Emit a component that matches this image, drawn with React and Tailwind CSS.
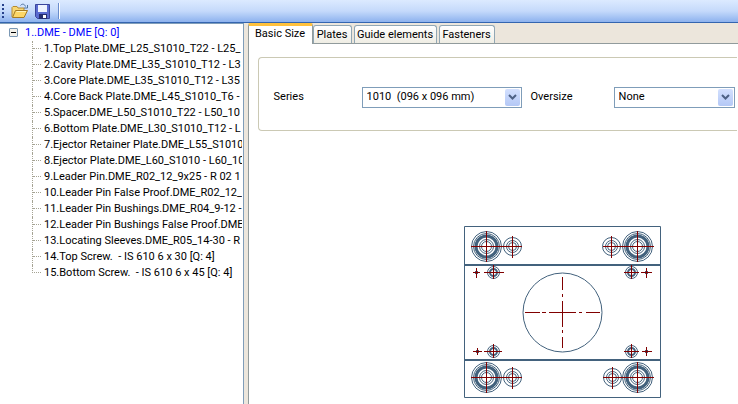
import React from "react";

const items = [
  "1.Top Plate.DME_L25_S1010_T22 - L25_",
  "2.Cavity Plate.DME_L35_S1010_T12 - L3",
  "3.Core Plate.DME_L35_S1010_T12 - L35",
  "4.Core Back Plate.DME_L45_S1010_T6 -",
  "5.Spacer.DME_L50_S1010_T22 - L50_10",
  "6.Bottom Plate.DME_L30_S1010_T12 - L",
  "7.Ejector Retainer Plate.DME_L55_S1010",
  "8.Ejector Plate.DME_L60_S1010 - L60_10",
  "9.Leader Pin.DME_R02_12_9x25 - R 02 1",
  "10.Leader Pin False Proof.DME_R02_12_",
  "11.Leader Pin Bushings.DME_R04_9-12 -",
  "12.Leader Pin Bushings False Proof.DME_",
  "13.Locating Sleeves.DME_R05_14-30 - R",
  "14.Top Screw.\u00a0 - IS 610 6 x 30 [Q: 4]",
  "15.Bottom Screw.\u00a0 - IS 610 6 x 45 [Q: 4]",
];

const tabs = [
  { label: "Plates", width: "w-[39px]" },
  { label: "Guide elements", width: "w-[83px]" },
  { label: "Fasteners", width: "w-[56px]" },
];

function OpenIcon() {
  return (
    <svg width="18" height="16" viewBox="0 0 18 16" aria-hidden="true">
      <path d="M1 14V4.500l1-1h4l1 1.500h6V8" fill="#f7d774" stroke="#b58a32" />
      <path d="M1.500 14.500 4.500 7.500h12l-3.500 7z" fill="#fcd667" stroke="#a47a22" />
      <path d="M5.500 8.500h9.500" stroke="#fff3b8" />
      <path d="M9.500 2.500C11 .5 13.500.7 14.500 3.500M16.500 2v3h-3.500" fill="none" stroke="#50749c" />
    </svg>
  );
}

function SaveIcon() {
  return (
    <svg width="15" height="15" viewBox="0 0 15 15" aria-hidden="true">
      <path d="M.5.5h14v14h-12l-2-2z" fill="#5a6bd0" stroke="#3a459c" />
      <path d="M3 1h9v7H3z" fill="#eef3ff" />
      <path d="M4 10h8v5H4z" fill="#252e70" />
      <path d="M8 11h3v3H8z" fill="#fff" />
    </svg>
  );
}

function Combo({ id, value, className }) {
  return (
    <div className={`relative h-[21px] ${className}`}>
      <select
        id={id}
        className="block h-full w-full appearance-none rounded-none border border-[#7f9db9] bg-white pl-1 pr-5 leading-4 text-black outline-none"
      >
        <option>{value}</option>
      </select>
      <span className="pointer-events-none absolute inset-y-[2px] right-[2px] flex w-[15px] items-center justify-center rounded-[2px] bg-linear-to-b from-[#d3e0fe] to-[#b4c8f6]">
        <svg width="9" height="6" viewBox="0 0 9 6" aria-hidden="true">
          <path d="M1 1l3.500 3.500L8 1" fill="none" stroke="#4d6185" strokeWidth="2" />
        </svg>
      </span>
    </div>
  );
}

function Pillar({ x, y }) {
  return (
    <g>
      <circle cx={x} cy={y} r="15" />
      <circle cx={x} cy={y} r="13" />
      <circle cx={x} cy={y} r="10.500" strokeWidth="3" />
      <circle cx={x} cy={y} r="7" />
      <circle cx={x} cy={y} r="5" />
    </g>
  );
}

function Screw({ x, y }) {
  return (
    <g>
      <circle cx={x} cy={y} r="9" />
      <circle cx={x} cy={y} r="6" />
      <circle cx={x} cy={y} r="4" />
    </g>
  );
}

function Pin({ x, y }) {
  return (
    <g>
      <circle cx={x} cy={y} r="6" />
      <circle cx={x} cy={y} r="3.500" strokeWidth="2" />
    </g>
  );
}

function PlateDrawing() {
  return (
    <svg className="shrink-0" width="197" height="172" viewBox="0 0 197 172" role="img" aria-label="Mold plate top view">
      <g fill="none" stroke="#43627d">
        <path d="M.5.5h196v171H.5z" />
        <path d="M0 39h197M0 134h197" strokeWidth="2" />
        <circle cx="98.500" cy="86.500" r="39.500" />
        <Pillar x={22.5} y={20.5} />
        <Pillar x={173.5} y={20.5} />
        <Pillar x={22.5} y={151.5} />
        <Pillar x={173.5} y={151.5} />
        <Screw x={48.5} y={20.5} />
        <Screw x={147.5} y={20.5} />
        <Screw x={48.5} y={151.5} />
        <Screw x={148.5} y={151.5} />
        <Pin x={29.5} y={46.5} />
        <Pin x={167.5} y={46.5} />
        <Pin x={29.5} y={125.5} />
        <Pin x={167.5} y={125.5} />
        <path d="M11 46.500h3M181 46.500h3M12 125.500h3M181 125.500h3" strokeWidth="3" />
      </g>
      <g fill="none" stroke="#800000">
        <path d="M7 20.500h51M139 20.500h51M7 151.500h51M139 151.500h51" />
        <path d="M22.500 5v31M173.500 5v31M22.500 136v31M173.500 136v31" />
        <path d="M48.500 10v22M147.500 10v22M48.500 141v22M148.500 141v22" />
        <path d="M20 46.500h20M160 46.500h15M20 125.500h18M160 125.500h15" />
        <path d="M29.500 39v14M167.500 39v14M29.500 118v14M167.500 118v14" />
        <path d="M9 46.500h7M12.500 42v10M177 46.500h11M182.500 42v10M9 125.500h9M13.500 122v7M178 125.500h10M182.500 121v9" />
        <path d="M61 86.500h15M78 86.500h4M85 86.500h27M115 86.500h3M122 86.500h14" />
        <path d="M98.500 51v13M98.500 68v3M98.500 75v26M98.500 104v3M98.500 111v11" />
      </g>
    </svg>
  );
}

export default function App() {
  return (
    <div className="flex h-screen flex-col overflow-hidden bg-[#ece6dc] font-[Roboto,'Liberation_Sans',sans-serif] text-[11px] leading-4 text-black">
      <header className="flex h-[23px] shrink-0 items-center border-b border-[#3465af] bg-linear-to-b from-[#dceaff] via-[#c5dafb] to-[#8db2ee] pl-[2px]">
        <span className="flex flex-col gap-[2px]">
          <i className="size-[2px] bg-[#27418c]" />
          <i className="size-[2px] bg-[#27418c]" />
          <i className="size-[2px] bg-[#27418c]" />
          <i className="size-[2px] bg-[#27418c]" />
        </span>
        <button type="button" aria-label="Open" className="ml-[7px]"><OpenIcon /></button>
        <button type="button" aria-label="Save" className="ml-[6px]"><SaveIcon /></button>
        <span className="ml-2 h-4 w-[2px] border-l border-[#6a8ccb] bg-white" />
      </header>

      <div className="flex min-h-0 flex-1">
        <nav className="w-[33%] shrink-0 overflow-hidden border-r border-t border-[#7f9db9] bg-white pr-px whitespace-nowrap">
          <div className="flex h-[17px] items-center pl-[9px] text-[#0000ff]">
            <button type="button" aria-label="Collapse" className="flex size-[9px] shrink-0 items-center justify-center rounded-[1px] border border-[#7b98b5] bg-[#f3f1ea]">
              <span className="h-px w-[5px] bg-black" />
            </button>
            <span className="ml-[7px]">1..DME - DME [Q: 0]</span>
          </div>
          <ul className="pl-8">
            {items.map((item, i) => (
              <li key={item} className="flex h-4">
                <span className={i === items.length - 1 ? "h-2 w-[9px] shrink-0 border-b border-l border-dotted border-[#a5a393]" : "w-[9px] shrink-0 border-l border-dotted border-[#a5a393]"}>
                  {i < items.length - 1 && <span className="block h-2 border-b border-dotted border-[#a5a393]" />}
                </span>
                <span className="ml-[3px] min-w-0 flex-1 overflow-hidden">{item}</span>
              </li>
            ))}
          </ul>
        </nav>

        <main className="ml-[4px] flex min-w-0 flex-1 flex-col">
          <div role="tablist" className="flex h-[21px] shrink-0 items-end border-b border-[#919b9c]">
            <button role="tab" aria-selected="true" type="button" className="-mb-px h-[21px] w-[65px] rounded-t-[2px] border-x border-t-[3px] border-x-[#919b9c] border-t-[#ffc13c] bg-white pb-[2px]">
              Basic Size
            </button>
            {tabs.map((tab) => (
              <button key={tab.label} role="tab" aria-selected="false" type="button" className={`mr-[2px] h-[18px] rounded-t-[3px] border border-b-0 border-[#91a7b4] bg-linear-to-b from-white to-[#efede4] ${tab.width}`}>
                {tab.label}
              </button>
            ))}
          </div>
          <section className="flex-1 border-l border-[#919b9c] bg-white pl-[9px] pt-[13px]">
            <div className="mr-px flex h-[74px] items-center rounded-l-[4px] border border-r-0 border-[#cbc9b4] pl-[15px] pr-[2px] pt-[6px]">
              <label htmlFor="series" className="w-[88px]">Series</label>
              <Combo id="series" value="1010&nbsp; (096 x 096 mm)" className="w-[160px]" />
              <label htmlFor="oversize" className="ml-[9px] w-[83px]">Oversize</label>
              <Combo id="oversize" value="None" className="flex-1" />
            </div>
            <div className="flex justify-center pl-[139px] pr-[10px] pt-[95px]">
              <PlateDrawing />
            </div>
          </section>
        </main>
      </div>
    </div>
  );
}
